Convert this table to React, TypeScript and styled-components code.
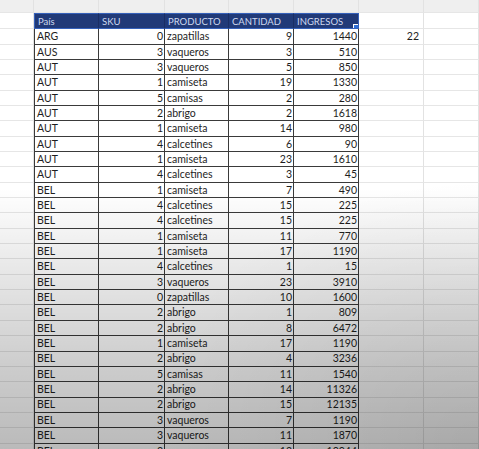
import React from "react";
import styled, { createGlobalStyle, css } from "styled-components";

const Global = createGlobalStyle`
  html, body { margin: 0; padding: 0; background: #ffffff; }
  body { width: 479px; height: 449px; overflow: hidden; }
  #root { width: 479px; height: 449px; position: relative; overflow: hidden; }
`;

const COLS = "34px 65px 66px 64px 65px 65px 65px 55px";

const Sheet = styled.div`
  display: flex;
  flex-direction: column;
  width: 479px;
  font-family: "Lato", "Liberation Sans", sans-serif;
  font-size: 10.5px;
  color: #1e1e1e;
`;

const Row = styled.div<{ $h: number; $top?: boolean }>`
  display: grid;
  grid-template-columns: ${COLS};
  height: ${(p) => p.$h}px;
  flex: none;
  background: ${(p) => (p.$top ? "#efefef" : "transparent")};
`;

type Kind = "blank" | "first" | "text" | "num" | "head" | "headFirst" | "headLast" | "loose";

const Cell = styled.div<{ $kind: Kind }>`
  box-sizing: border-box;
  position: relative;
  display: flex;
  align-items: center;
  padding: 0 3px;
  white-space: nowrap;
  overflow: hidden;
  line-height: 1;
  ${(p) => {
    switch (p.$kind) {
      case "blank":
        return css`
          border-right: 1px solid #e2e2e2;
          border-bottom: 1px solid #e6e6e6;
        `;
      case "loose":
        return css`
          justify-content: flex-end;
          padding-right: 4px;
          border-right: 1px solid #e2e2e2;
          border-bottom: 1px solid #e6e6e6;
        `;
      case "first":
        return css`
          border-left: 1.5px solid #3a3a3a;
          border-right: 1.5px solid #3a3a3a;
          border-bottom: 1.5px solid #3a3a3a;
          padding-left: 2px;
        `;
      case "text":
        return css`
          border-right: 1.5px solid #3a3a3a;
          border-bottom: 1.5px solid #3a3a3a;
          padding-left: 2px;
        `;
      case "num":
        return css`
          justify-content: flex-end;
          padding-right: 1px;
          border-right: 1.5px solid #3a3a3a;
          border-bottom: 1.5px solid #3a3a3a;
        `;
      case "head":
      case "headFirst":
      case "headLast":
        return css`
          background: #213a78;
          color: #cfd9f0;
          font-size: 9.5px;
          padding-left: 3px;
          border-top: 1.5px solid #3561bb;
          border-bottom: 1.5px solid #3561bb;
          border-right: 1px solid #1a2e64;
          ${p.$kind === "headFirst" && css`border-left: 1.5px solid #3561bb;`}
          ${p.$kind === "headLast" && css`border-right: 1.5px solid #3561bb;`}
        `;
    }
  }}
`;

const Handle = styled.span`
  position: absolute;
  right: -1px;
  bottom: -2px;
  width: 4px;
  height: 4px;
  background: #2f6fd6;
  border: 1px solid #ffffff;
  z-index: 2;
`;

const Shade = styled.div`
  position: absolute;
  inset: 0;
  pointer-events: none;
  background:
    radial-gradient(ellipse 70% 60% at 100% 100%, rgba(0, 0, 0, 0.1), rgba(0, 0, 0, 0) 100%),
    linear-gradient(
      180deg,
      rgba(0, 0, 0, 0) 0%,
      rgba(0, 0, 0, 0) 42%,
      rgba(0, 0, 0, 0.1) 62%,
      rgba(0, 0, 0, 0.2) 82%,
      rgba(0, 0, 0, 0.27) 100%
    );
`;

type R = [string, number, string, number, number];

const data: R[] = [
  ["ARG", 0, "zapatillas", 9, 1440],
  ["AUS", 3, "vaqueros", 3, 510],
  ["AUT", 3, "vaqueros", 5, 850],
  ["AUT", 1, "camiseta", 19, 1330],
  ["AUT", 5, "camisas", 2, 280],
  ["AUT", 2, "abrigo", 2, 1618],
  ["AUT", 1, "camiseta", 14, 980],
  ["AUT", 4, "calcetines", 6, 90],
  ["AUT", 1, "camiseta", 23, 1610],
  ["AUT", 4, "calcetines", 3, 45],
  ["BEL", 1, "camiseta", 7, 490],
  ["BEL", 4, "calcetines", 15, 225],
  ["BEL", 4, "calcetines", 15, 225],
  ["BEL", 1, "camiseta", 11, 770],
  ["BEL", 1, "camiseta", 17, 1190],
  ["BEL", 4, "calcetines", 1, 15],
  ["BEL", 3, "vaqueros", 23, 3910],
  ["BEL", 0, "zapatillas", 10, 1600],
  ["BEL", 2, "abrigo", 1, 809],
  ["BEL", 2, "abrigo", 8, 6472],
  ["BEL", 1, "camiseta", 17, 1190],
  ["BEL", 2, "abrigo", 4, 3236],
  ["BEL", 5, "camisas", 11, 1540],
  ["BEL", 2, "abrigo", 14, 11326],
  ["BEL", 2, "abrigo", 15, 12135],
  ["BEL", 3, "vaqueros", 7, 1190],
  ["BEL", 3, "vaqueros", 11, 1870],
  ["BEL", 3, "vaqueros", 12, 10044],
];

const ROW_H = 15.35;

export default function App() {
  return (
    <>
      <Global />
      <Sheet>
        <Row $h={13.3} $top>
          {Array.from({ length: 8 }).map((_, i) => (
            <Cell key={i} $kind="blank" />
          ))}
        </Row>
        <Row $h={16}>
          <Cell $kind="blank" />
          <Cell $kind="headFirst">País</Cell>
          <Cell $kind="head">SKU</Cell>
          <Cell $kind="head">PRODUCTO</Cell>
          <Cell $kind="head">CANTIDAD</Cell>
          <Cell $kind="headLast">
            INGRESOS
            <Handle />
          </Cell>
          <Cell $kind="blank" />
          <Cell $kind="blank" />
        </Row>
        {data.map((r, i) => (
          <Row key={i} $h={ROW_H}>
            <Cell $kind="blank" />
            <Cell $kind="first">{r[0]}</Cell>
            <Cell $kind="num">{r[1]}</Cell>
            <Cell $kind="text">{r[2]}</Cell>
            <Cell $kind="num">{r[3]}</Cell>
            <Cell $kind="num">{r[4]}</Cell>
            {i === 0 ? <Cell $kind="loose">22</Cell> : <Cell $kind="blank" />}
            <Cell $kind="blank" />
          </Row>
        ))}
      </Sheet>
      <Shade />
    </>
  );
}
